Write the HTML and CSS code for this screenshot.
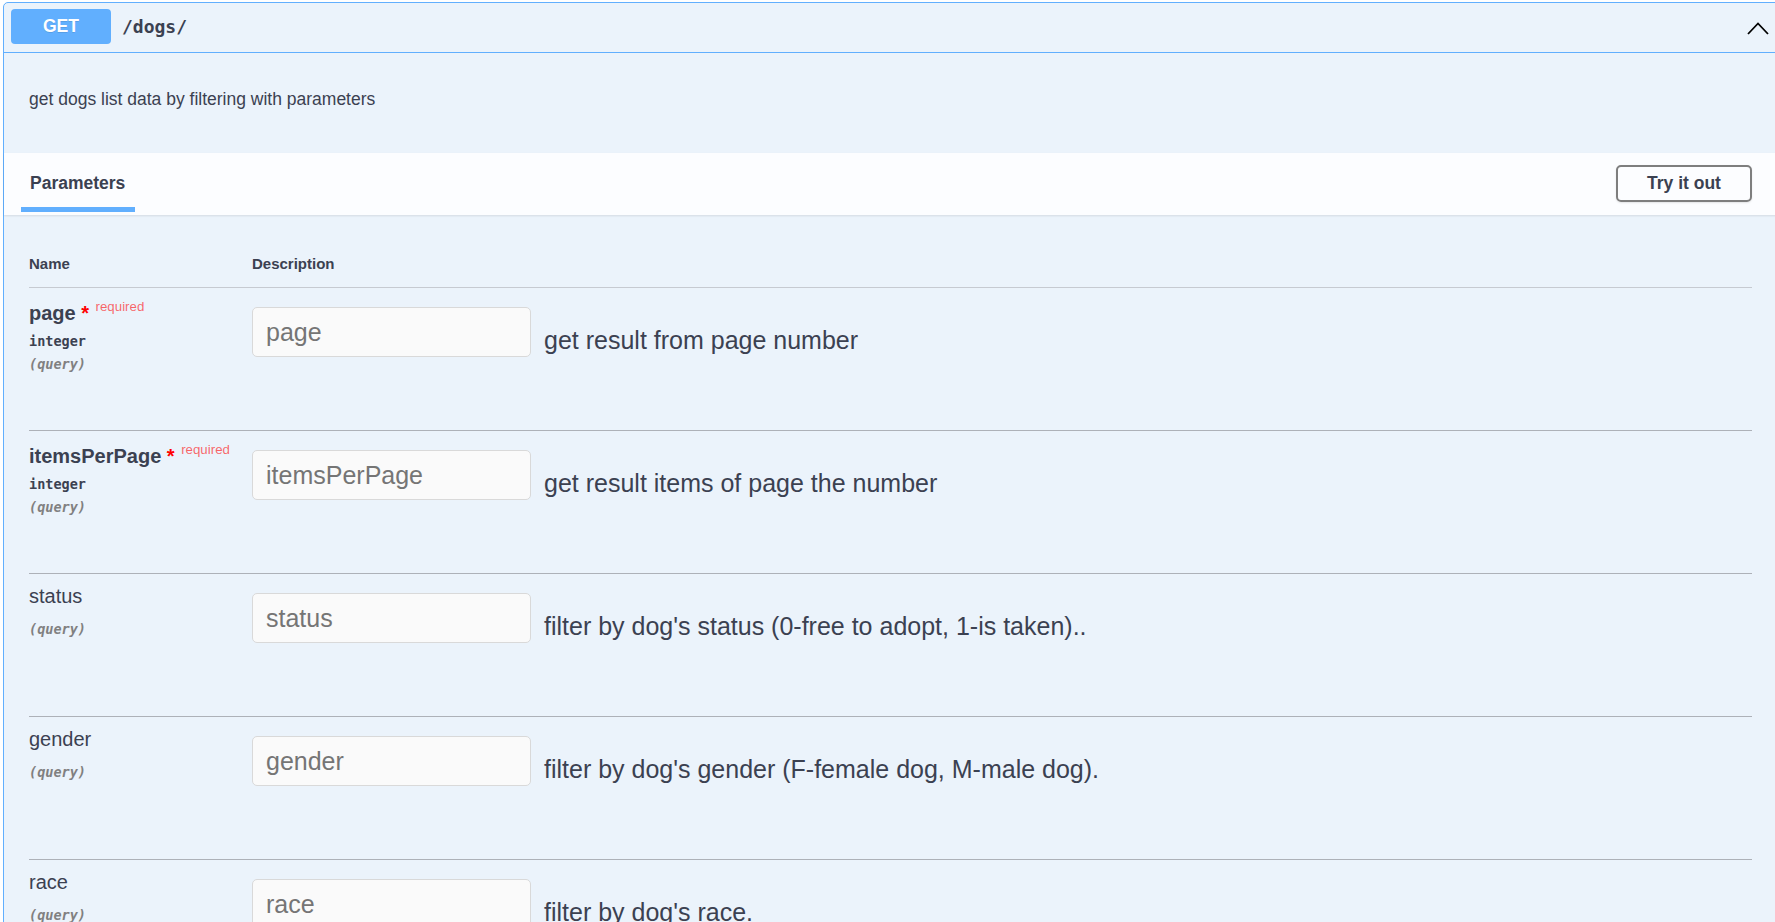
FILE: index.html
```html
<!DOCTYPE html>
<html lang="en">
<head>
<meta charset="utf-8">
<title>GET /dogs/</title>
<link rel="stylesheet" href="styles.css">
</head>
<body>
<div class="opblock">
  <div class="summary">
    <span class="method">GET</span>
    <span class="path">/dogs/</span>
    <svg class="chevron" width="22" height="13" viewBox="0 0 22 13"><polyline points="1,12 11,1.5 21,12" fill="none" stroke="#000" stroke-width="1.8"/></svg>
  </div>
  <div class="op-description">
    <p>get dogs list data by filtering with parameters</p>
  </div>
  <div class="section-header">
    <div class="tab">Parameters</div>
    <button class="try-btn" type="button">Try it out</button>
  </div>
  <div class="table-container">
    <div class="params-head">
      <div>Name</div>
      <div>Description</div>
    </div>

    <div class="param-row">
      <div class="col-name">
        <div class="param-name is-required">page<span class="star">&nbsp;*</span><span class="req">required</span></div>
        <div class="param-type">integer</div>
        <div class="param-in">(query)</div>
      </div>
      <div class="col-desc">
        <input class="param-input" type="text" placeholder="page">
        <p class="desc-text">get result from page number</p>
      </div>
    </div>

    <div class="param-row">
      <div class="col-name">
        <div class="param-name is-required">itemsPerPage<span class="star">&nbsp;*</span><span class="req">required</span></div>
        <div class="param-type">integer</div>
        <div class="param-in">(query)</div>
      </div>
      <div class="col-desc">
        <input class="param-input" type="text" placeholder="itemsPerPage">
        <p class="desc-text">get result items of page the number</p>
      </div>
    </div>

    <div class="param-row">
      <div class="col-name">
        <div class="param-name">status</div>
        <div class="param-type"></div>
        <div class="param-in">(query)</div>
      </div>
      <div class="col-desc">
        <input class="param-input" type="text" placeholder="status">
        <p class="desc-text">filter by dog's status (0-free to adopt, 1-is taken)..</p>
      </div>
    </div>

    <div class="param-row">
      <div class="col-name">
        <div class="param-name">gender</div>
        <div class="param-type"></div>
        <div class="param-in">(query)</div>
      </div>
      <div class="col-desc">
        <input class="param-input" type="text" placeholder="gender">
        <p class="desc-text">filter by dog's gender (F-female dog, M-male dog).</p>
      </div>
    </div>

    <div class="param-row">
      <div class="col-name">
        <div class="param-name">race</div>
        <div class="param-type"></div>
        <div class="param-in">(query)</div>
      </div>
      <div class="col-desc">
        <input class="param-input" type="text" placeholder="race">
        <p class="desc-text">filter by dog's race.</p>
      </div>
    </div>
  </div>
</div>
</body>
</html>
```
FILE: styles.css
```css
html, body {
  margin: 0;
  padding: 0;
  background: #ffffff;
  overflow: hidden;
}

body {
  font-family: "Liberation Sans", Arial, sans-serif;
  color: #3b4151;
}

.opblock {
  box-sizing: border-box;
  width: 1775px;
  margin: 2px 0 0 3px;
  border: 1px solid #61affe;
  border-radius: 5px 0 0 0;
  background: #ebf3fb;
}

.summary {
  display: flex;
  align-items: flex-start;
  height: 50px;
  box-sizing: border-box;
  padding: 6px 8px 0 7px;
  border-bottom: 1px solid #61affe;
}

.method {
  width: 100px;
  height: 35px;
  line-height: 35px;
  text-align: center;
  background: #61affe;
  color: #ffffff;
  font-weight: bold;
  font-size: 17.5px;
  border-radius: 4px;
  text-shadow: 0 1px 0 rgba(0, 0, 0, 0.1);
}

.path {
  padding-left: 11px;
  line-height: 36px;
  font-family: "DejaVu Sans Mono", "Liberation Mono", monospace;
  font-weight: bold;
  font-size: 18px;
  color: #3b4151;
}

.chevron {
  margin-left: auto;
  margin-top: 12.5px;
}

.op-description {
  height: 100px;
  box-sizing: border-box;
  padding: 36px 25px 0;
}

.op-description p {
  margin: 0;
  font-size: 17.5px;
  line-height: 20px;
}

.section-header {
  display: flex;
  justify-content: space-between;
  align-items: flex-start;
  height: 62px;
  box-sizing: border-box;
  padding: 0 25px 0 16.5px;
  background: #fcfdff;
  box-shadow: 0 1px 2px rgba(0, 0, 0, 0.1);
}

.tab {
  margin-top: 20px;
  padding: 0 9.5px 13.7px;
  border-bottom: 5px solid #61affe;
  font-weight: bold;
  font-size: 17.5px;
  line-height: 20px;
}

.try-btn {
  margin-top: 12px;
  width: 136px;
  height: 37px;
  box-sizing: border-box;
  padding: 0;
  border: 2px solid #7e7e7e;
  border-radius: 5px;
  background: transparent;
  font-family: "Liberation Sans", Arial, sans-serif;
  font-weight: bold;
  font-size: 17.5px;
  color: #3b4151;
  box-shadow: 0 1px 2px rgba(0, 0, 0, 0.1);
}

.table-container {
  padding: 25px 25px 0;
}

.params-head {
  display: grid;
  grid-template-columns: 223px 1fr;
  padding: 15px 0;
  line-height: 17px;
  font-size: 15px;
  font-weight: bold;
  border-bottom: 1px solid #c6cad1;
}

.param-row {
  display: grid;
  grid-template-columns: 223px 1fr;
  height: 143px;
  box-sizing: border-box;
  border-bottom: 1px solid #adb1b8;
}

.col-name {
  padding-top: 11px;
}

.param-name {
  font-size: 20px;
  line-height: 23px;
}

.param-name.is-required {
  padding-top: 3px;
  font-weight: bold;
}

.star {
  color: #ff0000;
}

.req {
  position: relative;
  top: -9.3px;
  padding-left: 6.5px;
  font-size: 13.3px;
  font-weight: normal;
  color: rgba(255, 0, 0, 0.6);
}

.param-type {
  padding: 6.25px 0;
  font-family: "DejaVu Sans Mono", "Liberation Mono", monospace;
  font-weight: bold;
  font-size: 13.5px;
  line-height: 16px;
  color: #3b4151;
}

.param-in {
  font-family: "DejaVu Sans Mono", "Liberation Mono", monospace;
  font-style: italic;
  font-weight: bold;
  font-size: 13.5px;
  line-height: 16px;
  color: #808080;
}

.col-desc {
  display: flex;
  align-items: flex-start;
}

.param-input {
  margin: 19px 0 0 0;
  width: 279px;
  height: 50px;
  box-sizing: border-box;
  padding: 0 13px;
  border: 1px solid #d9d9d9;
  border-radius: 5px;
  background: #fafafa;
  font-family: "Liberation Sans", Arial, sans-serif;
  font-size: 25px;
  color: #3b4151;
}

.param-input::placeholder {
  color: #757575;
}

.desc-text {
  margin: 38px 0 0 13px;
  font-size: 25px;
  line-height: 29px;
}
```
